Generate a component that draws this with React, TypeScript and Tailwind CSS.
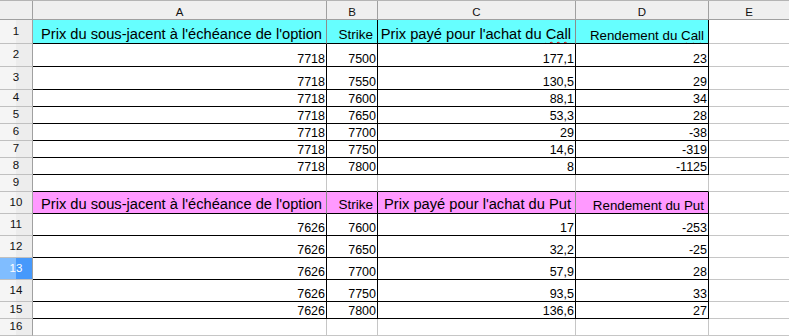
import React from "react";

type Kind = "headCall" | "headPut" | "data" | "blank";

interface SheetRow {
  n: number;
  h: string;
  kind: Kind;
  values?: string[];
  selected?: boolean;
}

const letters = ["A", "B", "C", "D", "E"];
const colWidths = ["w-[294px]", "w-[51px]", "w-[198px]", "w-[133px]", "w-[81px]"];

const rows: SheetRow[] = [
  { n: 1, h: "h-[24px]", kind: "headCall" },
  { n: 2, h: "h-[23px]", kind: "data", values: ["7718", "7500", "177,1", "23"] },
  { n: 3, h: "h-[23px]", kind: "data", values: ["7718", "7550", "130,5", "29"] },
  { n: 4, h: "h-[17px]", kind: "data", values: ["7718", "7600", "88,1", "34"] },
  { n: 5, h: "h-[17px]", kind: "data", values: ["7718", "7650", "53,3", "28"] },
  { n: 6, h: "h-[17px]", kind: "data", values: ["7718", "7700", "29", "-38"] },
  { n: 7, h: "h-[17px]", kind: "data", values: ["7718", "7750", "14,6", "-319"] },
  { n: 8, h: "h-[17px]", kind: "data", values: ["7718", "7800", "8", "-1125"] },
  { n: 9, h: "h-[17px]", kind: "blank" },
  { n: 10, h: "h-[22px]", kind: "headPut" },
  { n: 11, h: "h-[22px]", kind: "data", values: ["7626", "7600", "17", "-253"] },
  { n: 12, h: "h-[22px]", kind: "data", values: ["7626", "7650", "32,2", "-25"] },
  { n: 13, h: "h-[22px]", kind: "data", values: ["7626", "7700", "57,9", "28"], selected: true },
  { n: 14, h: "h-[22px]", kind: "data", values: ["7626", "7750", "93,5", "33"] },
  { n: 15, h: "h-[17px]", kind: "data", values: ["7626", "7800", "136,6", "27"] },
  { n: 16, h: "h-[17px]", kind: "blank" },
];

// LibreOffice spell check squiggle under "Call"
const Squiggle = ({ children }: { children: React.ReactNode }) => (
  <span className="underline decoration-wavy decoration-[#e00000] decoration-1 underline-offset-[2px]">{children}</span>
);

const HeaderText = ({ col, put }: { col: number; put: boolean }) => {
  const option = put ? "Put" : "Call";
  if (col === 0) return <span className="text-[14.67px]">Prix du sous-jacent à l'échéance de l'option</span>;
  if (col === 1) return <span className="text-[13.5px]">Strike</span>;
  if (col === 2)
    return (
      <span className="text-[14.67px]">
        Prix payé pour l'achat du {put ? option : <Squiggle>{option}</Squiggle>}
      </span>
    );
  return (
    <span className="text-[13.33px]">
      Rendement du {put ? option : <Squiggle>{option}</Squiggle>}
    </span>
  );
};

const Cell = ({ row, col }: { row: SheetRow; col: number }) => {
  const inTable = col < 4 && row.kind !== "blank";
  const isHead = row.kind === "headCall" || row.kind === "headPut";

  let right = "border-r-[#c6c6c6]";
  let bottom = "border-b-[#c6c6c6]";
  if (inTable) {
    right = isHead && (col === 0 || col === 2) ? "border-r-[#8c8c8c]" : "border-r-black";
    bottom = "border-b-black";
  }
  if (row.kind === "blank" && row.n === 9 && col < 4) bottom = "border-b-black";

  let bg = "bg-white";
  if (inTable && row.kind === "headCall") bg = "bg-[#66ffff]";
  if (inTable && row.kind === "headPut") bg = "bg-[#ff99ff]";

  return (
    <div
      className={`${colWidths[col]} shrink-0 h-full border-r border-b ${right} ${bottom} ${bg} flex items-end justify-end overflow-hidden whitespace-nowrap text-black leading-[1.15] ${
        isHead ? "pr-[4px]" : "pr-[1px]"
      }`}
    >
      {isHead && col < 4 && <HeaderText col={col} put={row.kind === "headPut"} />}
      {row.kind === "data" && col < 4 && <span className="text-[12.5px]">{row.values![col]}</span>}
    </div>
  );
};

export default function App() {
  return (
    <div className="w-[789px] h-[336px] overflow-hidden bg-white font-['Liberation_Sans',Arial,sans-serif]">
      {/* column header */}
      <div className="flex h-[20px] bg-[#efefef] border-t border-t-[#b4b4b4]">
        <div className="w-[33px] shrink-0 border-r border-b border-r-[#a0a0a0] border-b-[#a0a0a0]" />
        {letters.map((l, i) => (
          <div
            key={l}
            className={`${colWidths[i]} shrink-0 border-r border-b border-r-[#a0a0a0] border-b-[#a0a0a0] flex items-end justify-center text-[11.5px] leading-[1.15] text-[#111]`}
          >
            {l}
          </div>
        ))}
      </div>

      {rows.map((row) => (
        <div key={row.n} className={`flex ${row.h}`}>
          <div
            className={`w-[33px] shrink-0 h-full border-r border-b border-r-[#a0a0a0] border-b-[#c0c0c0] flex items-center justify-center text-[11.5px] leading-none ${
              row.selected
                ? "bg-[linear-gradient(to_right,#80bdff_50%,#4699fb_50%)] text-white"
                : "bg-[linear-gradient(to_right,#f5f5f5_50%,#ededed_50%)] text-[#111]"
            }`}
          >
            {row.n}
          </div>
          {letters.map((l, i) => (
            <Cell key={l} row={row} col={i} />
          ))}
        </div>
      ))}
    </div>
  );
}
